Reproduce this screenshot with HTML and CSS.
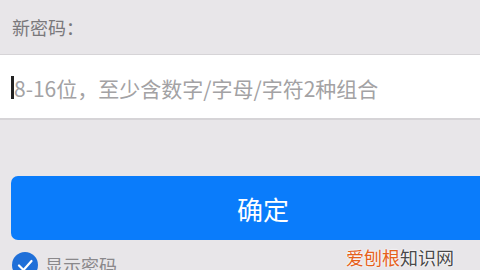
FILE: index.html
```html
<!DOCTYPE html>
<html lang="zh">
<head>
<meta charset="utf-8">
<link rel="stylesheet" href="styles.css">
</head>
<body>
<div class="page">
  <div class="label">新密码：</div>
  <div class="field">
    <span class="cursor"></span><span class="placeholder">8-16位，至少含数字/字母/字符2种组合</span>
  </div>
  <div class="spacer"></div>
  <div class="btn">确定</div>
  <div class="bottom">
    <div class="show">
      <span class="check"><svg viewBox="0 0 26 26" width="26" height="26"><path d="M7 13.5 L11.5 18 L19.5 9" fill="none" stroke="#fff" stroke-width="2.2" stroke-linecap="round" stroke-linejoin="round"/></svg></span>
      <span class="showtext">显示密码</span>
    </div>
    <div class="mark"><span class="or">爱刨根</span><span class="gr">知识网</span></div>
  </div>
</div>
</body>
</html>
```
FILE: styles.css
```css
html, body {
  margin: 0;
  padding: 0;
  background: #e8e6e9;
  overflow: hidden;
  width: 480px;
  height: 270px;
}
.page {
  font-family: "Noto Sans CJK SC", "Noto Sans", sans-serif;
  width: 480px;
}
.label {
  font-size: 18px;
  color: #7a787b;
  line-height: 24px;
  padding: 15px 0 0 12px;
  height: 38px;
  box-sizing: border-box;
}
.field {
  margin-top: 16px;
  height: 66px;
  background: #fff;
  border-top: 1px solid #d6d4d7;
  border-bottom: 2px solid #d6d4d7;
  box-sizing: border-box;
  display: flex;
  align-items: center;
  padding-left: 11px;
  padding-top: 2px;
}
.cursor {
  width: 3px;
  height: 23px;
  background: #222;
  flex: none;
}
.placeholder {
  font-size: 21px;
  color: #a3a2a4;
  margin-left: 0;
  white-space: nowrap;
  line-height: 24px;
}
.spacer {
  height: 56px;
}
.btn {
  margin-left: 11px;
  width: 504px;
  height: 64px;
  border-radius: 7px;
  background: #0a7cfb;
  color: #fff;
  font-size: 26px;
  display: flex;
  align-items: center;
  justify-content: center;
}
.bottom {
  display: flex;
  align-items: flex-start;
  justify-content: space-between;
  padding: 8px 26px 0 12px;
}
.show {
  display: flex;
  align-items: center;
  gap: 7px;
  margin-top: 4px;
}
.check {
  width: 26px;
  height: 26px;
  border-radius: 50%;
  background: #1f6fd8;
  display: flex;
}
.showtext {
  font-size: 18px;
  color: #8a888b;
  line-height: 24px;
}
.mark {
  font-size: 18px;
  line-height: 24px;
  margin-top: -3px;
  text-shadow: 0 0 2px #fff, 0 0 2px #fff;
}
.or { color: #e5611c; }
.gr { color: #4a4a4a; }
```
